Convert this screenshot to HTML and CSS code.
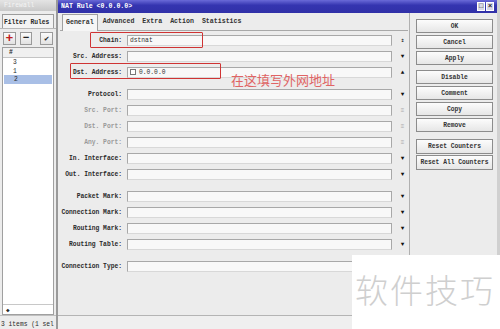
FILE: index.html
```html
<!DOCTYPE html>
<html>
<head>
    <title>NAT Rule</title>
    <meta name="viewport" content="width=device-width, initial-scale=1.0">
    <link rel="stylesheet" href="styles.css">
</head>
<body>
    <div class="screen">
        <div class="fw">
            <div class="fw-title">Firewall</div>
            <div class="fw-tabs"><span class="fw-tab">Filter Rules</span></div>
            <div class="fw-tools">
                <span class="tool add">+</span>
                <span class="tool del">&minus;</span>
                <span class="tool ok">&#10004;</span>
            </div>
            <div class="fw-list">
                <div class="fw-head">#</div>
                <div class="fw-row">3</div>
                <div class="fw-row">1</div>
                <div class="fw-row sel">2</div>
                <div class="fw-fill"></div>
                <div class="fw-scroll">&#9670;</div>
            </div>
            <div class="fw-status">3 items (1 sel</div>
        </div>

        <div class="nat">
            <div class="nat-title">
                <span>NAT Rule &lt;0.0.0.0&gt;</span>
                <div class="win-btns"><span class="wb">&#9633;</span><span class="wb">&times;</span></div>
            </div>
            <div class="nat-body">
                <div class="form">
                    <div class="tabs">
                        <span class="tab active">General</span>
                        <span class="tab">Advanced</span>
                        <span class="tab">Extra</span>
                        <span class="tab">Action</span>
                        <span class="tab">Statistics</span>
                    </div>

                    <div class="group">
                        <div class="row">
                            <label>Chain:</label>
                            <div class="field">dstnat</div>
                            <span class="arrow">&#8661;</span>
                        </div>
                        <div class="row">
                            <label>Src. Address:</label>
                            <div class="field"></div>
                            <span class="arrow">&#9660;</span>
                        </div>
                        <div class="row">
                            <label>Dst. Address:</label>
                            <div class="field"><span class="check"></span>0.0.0.0</div>
                            <span class="arrow">&#9650;</span>
                        </div>
                    </div>

                    <div class="group">
                        <div class="row">
                            <label>Protocol:</label>
                            <div class="field"></div>
                            <span class="arrow">&#9660;</span>
                        </div>
                        <div class="row off">
                            <label>Src. Port:</label>
                            <div class="field"></div>
                            <span class="arrow">&#8801;</span>
                        </div>
                        <div class="row off">
                            <label>Dst. Port:</label>
                            <div class="field"></div>
                            <span class="arrow">&#8801;</span>
                        </div>
                        <div class="row off">
                            <label>Any. Port:</label>
                            <div class="field"></div>
                            <span class="arrow">&#8801;</span>
                        </div>
                        <div class="row">
                            <label>In. Interface:</label>
                            <div class="field"></div>
                            <span class="arrow">&#9660;</span>
                        </div>
                        <div class="row">
                            <label>Out. Interface:</label>
                            <div class="field"></div>
                            <span class="arrow">&#9660;</span>
                        </div>
                    </div>

                    <div class="group">
                        <div class="row">
                            <label>Packet Mark:</label>
                            <div class="field"></div>
                            <span class="arrow">&#9660;</span>
                        </div>
                        <div class="row">
                            <label>Connection Mark:</label>
                            <div class="field"></div>
                            <span class="arrow">&#9660;</span>
                        </div>
                        <div class="row">
                            <label>Routing Mark:</label>
                            <div class="field"></div>
                            <span class="arrow">&#9660;</span>
                        </div>
                        <div class="row">
                            <label>Routing Table:</label>
                            <div class="field"></div>
                            <span class="arrow">&#9660;</span>
                        </div>
                    </div>

                    <div class="group">
                        <div class="row">
                            <label>Connection Type:</label>
                            <div class="field"></div>
                            <span class="arrow"></span>
                        </div>
                    </div>

                    <!-- annotations drawn over the form -->
                    <div class="mark mark-chain"></div>
                    <div class="mark mark-dst"></div>
                    <div class="note">在这填写外网地址</div>
                </div>

                <div class="buttons">
                    <div class="btn-group">
                        <button>OK</button>
                        <button>Cancel</button>
                        <button>Apply</button>
                    </div>
                    <div class="btn-group">
                        <button>Disable</button>
                        <button>Comment</button>
                        <button>Copy</button>
                        <button>Remove</button>
                    </div>
                    <div class="btn-group last">
                        <button>Reset Counters</button>
                        <button>Reset All Counters</button>
                    </div>
                </div>
            </div>
            <div class="nat-status"></div>
        </div>

        <div class="watermark">软件技巧</div>
    </div>
</body>
</html>
```

FILE: styles.css
```css
* {
    box-sizing: border-box;
    margin: 0;
    padding: 0;
}

body {
    background: #fff;
    font-family: "Liberation Mono", "DejaVu Sans Mono", monospace;
    font-size: 6.3px;
    font-weight: bold;
    color: #2a2a2a;
}

.screen {
    position: relative;
    width: 500px;
    height: 329px;
    overflow: hidden;
    display: flex;
    background: #ececec;
}

/* Firewall window behind */
.fw {
    width: 58px;
    display: flex;
    flex-direction: column;
    background: #ececec;
    border-right: 2px solid #9a9a9a;
}

.fw-title {
    height: 11px;
    background: linear-gradient(#e4e4e4, #c8c8c8);
    color: #f4f4f4;
    padding: 2px 4px;
    font-weight: normal;
}

.fw-tabs {
    padding: 3px 2px 0;
}

.fw-tab {
    display: block;
    border: 1px solid #9c9c9c;
    border-bottom: none;
    background: #f3f3f3;
    padding: 4px 1px 0;
    white-space: nowrap;
    overflow: hidden;
    height: 14px;
}

.fw-tools {
    display: flex;
    gap: 4px;
    padding: 3px 3px 2px;
    border-top: 1px solid #b8b8b8;
}

.tool {
    width: 13px;
    height: 13px;
    border: 1px solid #9a9a9a;
    background: linear-gradient(#fbfbfb, #e2e2e2);
    display: flex;
    align-items: center;
    justify-content: center;
    font-size: 11px;
    line-height: 1;
    color: #222;
}

.tool.add {
    color: #c02020;
    font-size: 13px;
}

.tool.ok {
    margin-left: 4px;
    font-size: 8px;
}

.fw-list {
    flex: 1;
    margin: 0 2px;
    background: #fff;
    border: 1px solid #a0a0a0;
    display: flex;
    flex-direction: column;
}

.fw-head {
    height: 10px;
    padding: 1px 6px;
    background: #f0f0f0;
    border-bottom: 1px solid #c4c4c4;
}

.fw-row {
    height: 8.5px;
    padding: 1px 10px;
    font-weight: normal;
}

.fw-row.sel {
    background: #a9bfe6;
    margin: 0 1px;
}

.fw-fill {
    flex: 1;
}

.fw-scroll {
    height: 10px;
    border-top: 1px solid #c8c8c8;
    padding: 1px 3px;
    font-size: 6px;
}

.fw-status {
    height: 14px;
    padding: 5px 1px 0;
    font-weight: normal;
    white-space: nowrap;
    border-top: 1px solid #c0c0c0;
}

/* NAT Rule window */
.nat {
    flex: 1;
    display: flex;
    flex-direction: column;
    border-right: 3px solid #d0d0d0;
}

.nat-title {
    height: 13px;
    background: linear-gradient(#6a6ad8, #3434b0 40%, #3030a8);
    color: #fff;
    display: flex;
    align-items: center;
    justify-content: space-between;
    padding: 0 3px 0 3px;
    font-size: 6.6px;
}

.win-btns {
    display: flex;
    gap: 1px;
}

.wb {
    width: 8px;
    height: 9px;
    background: #d8d8e8;
    border: 1px solid #fff;
    color: #222;
    font-size: 7px;
    line-height: 7px;
    text-align: center;
}

.nat-body {
    flex: 1;
    display: flex;
}

.form {
    position: relative;
    width: 350px;
    padding: 1px 0 0 2px;
}

.tabs {
    display: flex;
    gap: 2px;
    height: 17px;
    padding-left: 2px;
    border-bottom: 1px solid #a8a8a8;
    margin-bottom: 1px;
}

.tab {
    padding: 4px 3px 0;
    font-size: 6.6px;
    color: #333;
}

.tab.active {
    border: 1px solid #a0a0a0;
    border-bottom: none;
    background: #f6f6f6;
    margin-bottom: -1px;
}

.group {
    margin-bottom: 6px;
}

.row {
    display: grid;
    grid-template-columns: 62px 265px 11px;
    column-gap: 5px;
    align-items: center;
    height: 16px;
}

.row label {
    text-align: right;
    white-space: nowrap;
}

.row.off label {
    color: #9a9a9a;
}

.field {
    height: 11px;
    border: 1px solid #a8a8a8;
    border-bottom-color: #d8d8d8;
    background: #f8f8f8;
    display: flex;
    align-items: center;
    padding-left: 2px;
    font-weight: normal;
    color: #333;
}

.check {
    width: 6px;
    height: 6px;
    border: 1px solid #777;
    background: #fff;
    margin-right: 3px;
}

.arrow {
    font-size: 6px;
    text-align: center;
    color: #111;
}

.row.off .arrow {
    color: #a8a8a8;
}

.mark {
    position: absolute;
    border: 1.5px solid #cf3434;
    border-radius: 1px;
}

.mark-chain {
    left: 32px;
    top: 19px;
    width: 113px;
    height: 16px;
}

.mark-dst {
    left: 12px;
    top: 50px;
    width: 151px;
    height: 16px;
}

.note {
    position: absolute;
    left: 173px;
    top: 59px;
    font-family: "Noto Sans CJK SC", sans-serif;
    font-size: 13px;
    font-weight: normal;
    line-height: 15px;
    color: #e06464;
}

.buttons {
    flex: 1;
    border-left: 1px solid #b0b0b0;
    margin-left: 1px;
    padding: 6px 3px 0 6px;
    display: flex;
    flex-direction: column;
    gap: 5px;
}

.btn-group {
    display: flex;
    flex-direction: column;
    gap: 2px;
}

.btn-group.last {
    margin-top: 2px;
    gap: 1px;
}

.buttons button {
    height: 14px;
    width: 77px;
    border: 1px solid #8c8c8c;
    background: linear-gradient(#fcfcfc, #e6e6e6);
    font-family: inherit;
    font-size: 6.3px;
    font-weight: bold;
    color: #333;
}

.btn-group.last button {
    height: 15px;
}

.nat-status {
    height: 14px;
    border-top: 1px solid #b4b4b4;
    background: #efefef;
}

/* watermark box over the corner */
.watermark {
    position: absolute;
    left: 352px;
    top: 255px;
    width: 148px;
    height: 74px;
    background: #fff;
    font-family: "Noto Sans CJK SC", sans-serif;
    font-size: 33px;
    font-weight: 300;
    letter-spacing: 2px;
    color: #cfcfcf;
    padding: 18px 0 0 3px;
    line-height: 1;
    white-space: nowrap;
}
```
